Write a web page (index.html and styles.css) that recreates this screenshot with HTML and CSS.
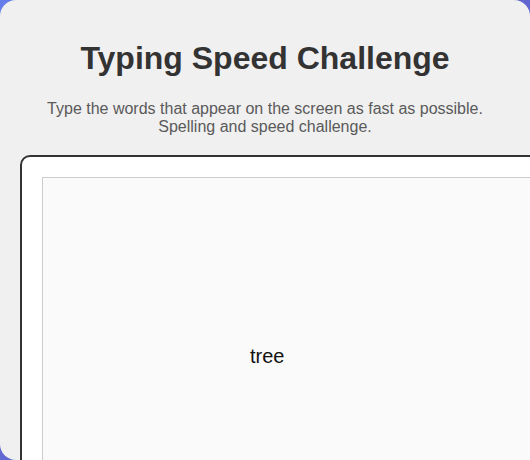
FILE: index.html
```html
<!DOCTYPE html>
<html lang="en">
<head>
<meta charset="utf-8">
<title>Typing Speed Challenge</title>
<link rel="stylesheet" href="styles.css">
</head>
<body>
<div class="container">
  <h1 class="title">Typing Speed Challenge</h1>
  <p class="subtitle">Type the words that appear on the screen as fast as possible.<br>Spelling and speed challenge.</p>
  <div class="game">
    <div class="area">
      <span class="word" style="left:207px;top:167px">tree</span>
    </div>
  </div>
</div>
</body>
</html>
```
FILE: styles.css
```css
html, body {
  margin: 0;
  height: 100%;
  overflow: hidden;
}
body {
  background: linear-gradient(135deg, #667eea 0%, #5b4fb8 100%);
  font-family: "Liberation Sans", Arial, sans-serif;
}
.container {
  box-sizing: border-box;
  width: 100%;
  height: 100%;
  background: #f0f0f0;
  border-radius: 16px;
  padding: 20px;
  text-align: center;
}
.title {
  margin: 20px 0 23px;
  font-size: 32px;
  font-weight: bold;
  color: #333;
}
.subtitle {
  margin: 0 0 19px;
  font-size: 16px;
  color: #5a5a5a;
}
.game {
  width: 600px;
  background: #fff;
  border: 2px solid #333;
  border-radius: 10px;
  padding: 20px;
  text-align: left;
}
.area {
  position: relative;
  height: 400px;
  background: #fafafa;
  border: 1px solid #ccc;
}
.word {
  position: absolute;
  font-size: 20px;
  color: #111;
}
```
